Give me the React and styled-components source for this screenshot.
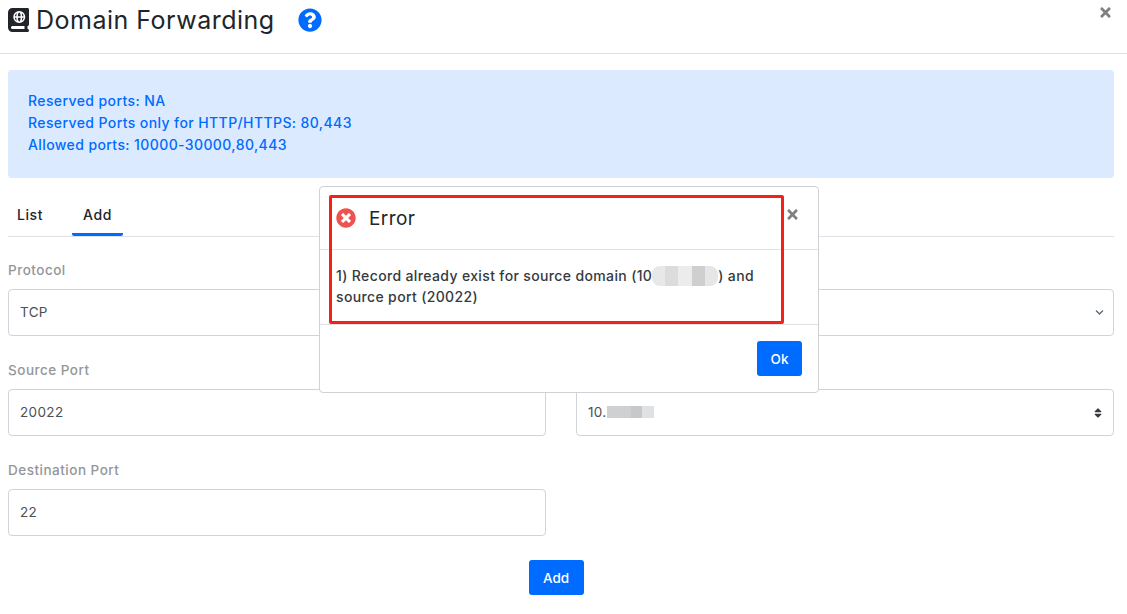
import React from "react";
import styled, { createGlobalStyle } from "styled-components";
import { FaBookAtlas } from "react-icons/fa6";
import { FaQuestionCircle, FaTimes, FaTimesCircle, FaSort, FaChevronDown } from "react-icons/fa";

const Global = createGlobalStyle`
  html, body { margin: 0; padding: 0; background: #fff; }
  body { font-family: Inter, "Liberation Sans", sans-serif; color: #212529; }
`;

const Page = styled.div`
  position: relative;
  width: 1127px;
  height: 614px;
  overflow: hidden;
`;
const Header = styled.header`
  height: 46px;
  border-bottom: 1px solid #dee2e6;
  display: flex;
  align-items: flex-start;
  padding: 7px 14px 0 8px;
`;
const Title = styled.h1`
  margin: 0;
  font-size: 25px;
  line-height: 26px;
  font-weight: 400;
  color: #212529;
  display: flex;
  align-items: center;
  letter-spacing: 0.5px;
`;
const BookIcon = styled(FaBookAtlas)`
  width: 21px;
  height: 24px;
  margin-right: 7px;
  color: #212529;
`;
const HelpIcon = styled(FaQuestionCircle)`
  width: 24px;
  height: 24px;
  margin-left: 23px;
  color: #006bff;
`;
const CloseBtn = styled.span`
  margin-left: auto;
  margin-top: -2px;
  color: #808080;
  font-size: 15px;
  display: flex;
`;
const Alert = styled.div`
  margin: 16px 13px 0 8px;
  height: 108px;
  box-sizing: border-box;
  padding: 20px;
  background: #dbeafe;
  border-radius: 4px;
  color: #006bff;
  font-size: 14px;
  font-weight: 500;
  letter-spacing: 0.4px;
  line-height: 22px;
`;
const Tabs = styled.nav`
  margin: 18px 13px 0 8px;
  height: 40px;
  border-bottom: 1px solid #dee2e6;
  display: flex;
`;
const Tab = styled.span`
  height: 40px;
  box-sizing: border-box;
  padding-top: 10px;
  width: ${p => (p.$active ? "51px" : "44px")};
  margin-left: ${p => (p.$active ? "20px" : "0")};
  text-align: center;
  font-size: 14px;
  font-weight: 500;
  letter-spacing: 0.6px;
  line-height: 18px;
  color: #212529;
  border-bottom: ${p => (p.$active ? "3px solid #006bff" : "none")};
  border-radius: 2px;
`;
const Form = styled.form`
  margin: 23px 13px 0 8px;
  display: grid;
  grid-template-columns: 538px 538px;
  column-gap: 30px;
  row-gap: 24px;
`;
const Group = styled.div`
  display: flex;
  flex-direction: column;
  height: 76px;
`;
const Label = styled.label`
  font-size: 13.5px;
  font-weight: 500;
  letter-spacing: 0.5px;
  line-height: 20px;
  height: 29px;
  color: #939699;
`;
const Field = styled.div`
  height: 47px;
  box-sizing: border-box;
  border: 1px solid #ced4da;
  border-radius: 4px;
  padding: 0 12px 2px 11px;
  display: flex;
  align-items: center;
  justify-content: space-between;
  font-size: 13.5px;
  letter-spacing: 0.35px;
  color: #495057;
`;
const Value = styled.span`
  display: flex;
  align-items: center;
`;
const Chevron = styled(FaChevronDown)`
  width: 9px;
  height: 9px;
  color: #5f6b7a;
  margin: 2px -3px 0 0;
`;
const Updown = styled(FaSort)`
  width: 8px;
  height: 12px;
  color: #343a40;
  margin: 2px -1px 0 0;
`;
const Pixelated = styled.span`
  display: inline-block;
  width: 47px;
  height: 12px;
  background: linear-gradient(90deg, #cfd0d2 0 50%, #c6c8ca 50% 75%, #e0e1e3 75% 100%);
`;
const Actions = styled.div`
  display: flex;
  justify-content: center;
  margin: 0 23px 0 8px;
  padding-top: 24px;
`;
const Primary = styled.button`
  border: 0;
  background: #006bff;
  color: #fff;
  border-radius: 3px;
  font-family: inherit;
  font-size: 13.5px;
  font-weight: 500;
  height: ${p => p.$h}px;
  width: ${p => p.$w}px;
  padding: 0;
`;
const Modal = styled.div`
  position: absolute;
  left: 319px;
  top: 186px;
  width: 500px;
  height: 207px;
  box-sizing: border-box;
  background: #fff;
  border: 1px solid #cfd1d4;
  border-radius: 4px;
  display: flex;
  flex-direction: column;
`;
const ModalHead = styled.div`
  height: 63px;
  box-sizing: border-box;
  border-bottom: 1px solid #dee2e6;
  display: flex;
  align-items: flex-start;
  padding: 21px 18px 0 16px;
`;
const ErrorIcon = styled(FaTimesCircle)`
  width: 20px;
  height: 20px;
  color: #ef5350;
  margin-right: 13px;
`;
const ModalTitle = styled.h5`
  margin: 1px 0 0;
  font-size: 19px;
  line-height: 20px;
  font-weight: 400;
  letter-spacing: 0.4px;
  color: #212529;
`;
const ModalClose = styled.span`
  margin-left: auto;
  margin-top: -1px;
  color: #808080;
  font-size: 15px;
  display: flex;
`;
const ModalBody = styled.div`
  height: 75px;
  box-sizing: border-box;
  padding: 15px 16px 0;
  border-bottom: 1px solid #dee2e6;
  font-size: 14px;
  font-weight: 500;
  letter-spacing: 0.36px;
  line-height: 21px;
  color: #343a40;
`;
const BlurredHost = styled.span`
  display: inline-block;
  width: 66px;
  height: 20px;
  vertical-align: -5px;
  border-radius: 8px;
  background: linear-gradient(90deg, #e8e8e8 0 20%, #dcdcdc 20% 40%, #ececec 40% 60%, #cfcfcf 60% 80%, #e6e6e6 80% 100%);
`;
const ModalFoot = styled.div`
  flex: 1;
  display: flex;
  justify-content: flex-end;
  align-items: flex-start;
  padding: 16px 16px 0;
`;
const Annotation = styled.div`
  position: absolute;
  left: 329px;
  top: 195px;
  width: 455px;
  height: 129px;
  box-sizing: border-box;
  border: 3px solid #f5201a;
  border-radius: 2px;
  pointer-events: none;
`;

// the right hand labels sit behind the modal, so they are left empty
const fields = [
  { id: "protocol", label: "Protocol", value: "TCP" },
  { id: "domain", icon: <Chevron /> },
  { id: "sport", label: "Source Port", value: "20022" },
  { id: "dest", value: <>10.<Pixelated /></>, icon: <Updown /> },
  { id: "dport", label: "Destination Port", value: "22" },
];

export default function App() {
  return (
    <Page>
      <Global />
      <Header>
        <Title>
          <BookIcon />
          Domain Forwarding
          <HelpIcon />
        </Title>
        <CloseBtn><FaTimes /></CloseBtn>
      </Header>
      <Alert>
        Reserved ports: NA<br />
        Reserved Ports only for HTTP/HTTPS: 80,443<br />
        Allowed ports: 10000-30000,80,443
      </Alert>
      <Tabs>
        <Tab>List</Tab>
        <Tab $active>Add</Tab>
      </Tabs>
      <Form>
        {fields.map(f => (
          <Group key={f.id}>
            <Label>{f.label}</Label>
            <Field>
              <Value>{f.value}</Value>
              {f.icon}
            </Field>
          </Group>
        ))}
      </Form>
      <Actions>
        <Primary $w={55} $h={35}>Add</Primary>
      </Actions>

      <Modal>
        <ModalHead>
          <ErrorIcon />
          <ModalTitle>Error</ModalTitle>
          <ModalClose><FaTimes /></ModalClose>
        </ModalHead>
        <ModalBody>
          1) Record already exist for source domain (10<BlurredHost />) and<br />source port (20022)
        </ModalBody>
        <ModalFoot>
          <Primary $w={45} $h={35}>Ok</Primary>
        </ModalFoot>
      </Modal>
      <Annotation />
    </Page>
  );
}
